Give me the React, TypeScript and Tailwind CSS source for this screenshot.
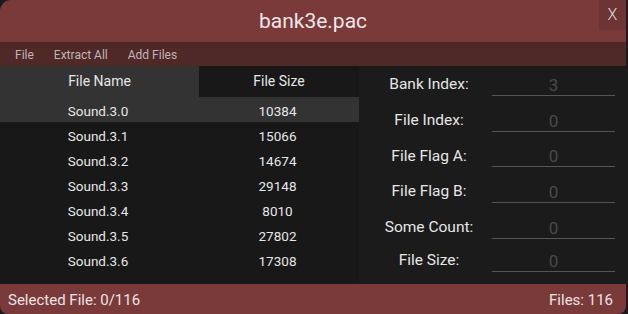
const files = [
  { name: 'Sound.3.0', size: 10384 },
  { name: 'Sound.3.1', size: 15066 },
  { name: 'Sound.3.2', size: 14674 },
  { name: 'Sound.3.3', size: 29148 },
  { name: 'Sound.3.4', size: 8010 },
  { name: 'Sound.3.5', size: 27802 },
  { name: 'Sound.3.6', size: 17308 },
];

const fields = [
  { label: 'Bank Index:', value: '3', h: 'h-[36px]' },
  { label: 'File Index:', value: '0', h: 'h-[36px]' },
  { label: 'File Flag A:', value: '0', h: 'h-[35px]' },
  { label: 'File Flag B:', value: '0', h: 'h-[36px]' },
  { label: 'Some Count:', value: '0', h: 'h-[36px]' },
  { label: 'File Size:', value: '0', h: 'h-[30px]' },
];

export default function App() {
  return (
    <div className="w-[628px] h-[314px] bg-[#1b1b1b] font-['Roboto',sans-serif]">
      <div className="flex flex-col w-[626px] h-full overflow-hidden rounded-tl-[11px] rounded-b-[8px]">
        {/* title bar */}
        <div className="relative h-[42px] bg-[#7b3a3a] flex items-center justify-center pt-[2px]">
          <span className="text-[21px] text-[#efe7e7]">bank3e.pac</span>
          <button className="absolute right-0 top-0 w-[27px] h-[30px] bg-[#6c3434] text-[#ddd] text-[16px] font-light flex items-center justify-center">
            X
          </button>
        </div>

        {/* menu */}
        <div className="h-[24px] bg-[#4f2828] flex items-center gap-[20px] pl-[15px] pt-[2px] text-[12px] text-[#c4b4b4]">
          <span>File</span>
          <span>Extract All</span>
          <span>Add Files</span>
        </div>

        {/* body */}
        <div className="h-[218px] flex bg-[#1b1b1b]">
          <div className="w-[359px] overflow-hidden bg-[#181818]">
            <div className="flex h-[31px] text-[14px] text-[#e6e6e6]">
              <div className="w-[199px] bg-[#333333] flex items-center justify-center">File Name</div>
              <div className="w-[160px] flex items-center justify-center pb-[1px]">File Size</div>
            </div>
            {files.map((f, i) => (
              <div
                key={f.name}
                className={`flex h-[25px] pt-[3px] text-[13.5px] text-[#e6e6e6] ${i === 0 ? 'bg-[#333333]' : ''}`}
              >
                <div className="w-[196px] flex items-center justify-center">{f.name}</div>
                <div className="w-[163px] flex items-center justify-center">{f.size}</div>
              </div>
            ))}
          </div>

          <div className="flex-1 pt-[1px]">
            {fields.map((f) => (
              <div key={f.label} className={`flex items-center ${f.h}`}>
                <div className="w-[140px] text-center text-[15.5px] text-[#e6e6e6]">{f.label}</div>
                <div className="ml-[-7px] w-[123px] h-[21px] border-b border-[#555] text-center text-[17px] leading-[20px] text-[#4a4a4a]">
                  {f.value}
                </div>
              </div>
            ))}
          </div>
        </div>

        {/* status bar */}
        <div className="h-[30px] bg-[#7b3a3a] flex items-center justify-between pl-[8px] pr-[13px] pt-[2px] text-[15px] text-[#ece4e4]">
          <span>Selected File: 0/116</span>
          <span>Files: 116</span>
        </div>
      </div>
    </div>
  );
}
